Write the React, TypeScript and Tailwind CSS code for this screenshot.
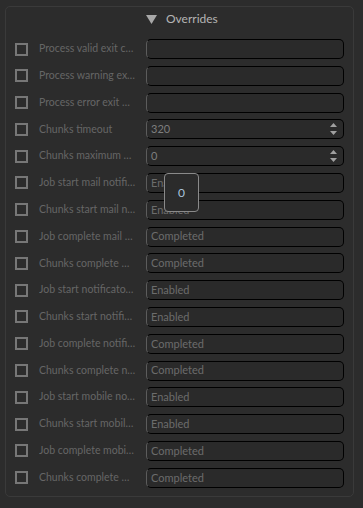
const rows: [string, string, boolean?][] = [
  ["Process valid exit c…", ""],
  ["Process warning ex…", ""],
  ["Process error exit …", ""],
  ["Chunks timeout", "320", true],
  ["Chunks maximum …", "0", true],
  ["Job start mail notifi…", "Enabled"],
  ["Chunks start mail n…", "Enabled"],
  ["Job complete mail …", "Completed"],
  ["Chunks complete …", "Completed"],
  ["Job start notificato…", "Enabled"],
  ["Chunks start notifi…", "Enabled"],
  ["Job complete notifi…", "Completed"],
  ["Chunks complete n…", "Completed"],
  ["Job start mobile no…", "Enabled"],
  ["Chunks start mobil…", "Enabled"],
  ["Job complete mobi…", "Completed"],
  ["Chunks complete …", "Completed"],
];

function Spin() {
  return <div className="flex flex-col items-center gap-[4px] pr-[6px]">
    <svg width="7" height="4" viewBox="0 0 7 4"><path d="M3.5 0L7 4H0z" fill="#a0a0a0" /></svg>
    <svg width="7" height="4" viewBox="0 0 7 4"><path d="M0 0h7L3.5 4z" fill="#a0a0a0" /></svg>
  </div>;
}

export default function App() {
  return <div className="relative h-[508px] w-[363px] overflow-hidden bg-[#2c2c2c] pt-[6px] pl-[5px] pr-[9px]" style={{ fontFamily: "Lato, 'Open Sans', sans-serif" }}>
    <div className="h-[491px] rounded-[5px] border border-[#3a3a3a]">
      <div className="flex h-[22px] items-center pl-[140px] pt-[2px]">
        <svg width="11" height="9" viewBox="0 0 11 9"><path d="M0 0h11L5.5 9z" fill="#a8a8a8" /></svg>
        <span className="ml-[9px] text-[12px] text-[#b4b4b4]">Overrides</span>
      </div>
      <div className="mt-[10px] flex flex-col gap-[6.8px] pl-[9px]">
        {rows.map(([label, value, spin], i) => <div key={i} className="flex h-[20px] items-center">
          <span className="size-[13px] shrink-0 border-2 border-[#777]" />
          <span className="ml-[11px] w-[107px] shrink-0 overflow-hidden whitespace-nowrap text-[10.5px] text-[#666]">{label}</span>
          <div className="flex h-[20px] w-[198px] shrink-0 items-center justify-between rounded-[5px] border border-black border-l-[#5c5c5c] bg-[#2a2a2a] pl-[4px]">
            <span className={`text-[11px] ${spin ? "text-[#7e7e7e]" : "text-[#6c6c6c]"}`}>{value}</span>
            {spin && <Spin />}
          </div>
        </div>)}
      </div>
    </div>
    <div className="absolute left-[164px] top-[173px] flex h-[39px] w-[35px] items-center justify-center rounded-[4px] border border-[#8a8a8a] bg-[#2b2b2b] text-[12px] text-[#a9c4dc]">0</div>
  </div>;
}
